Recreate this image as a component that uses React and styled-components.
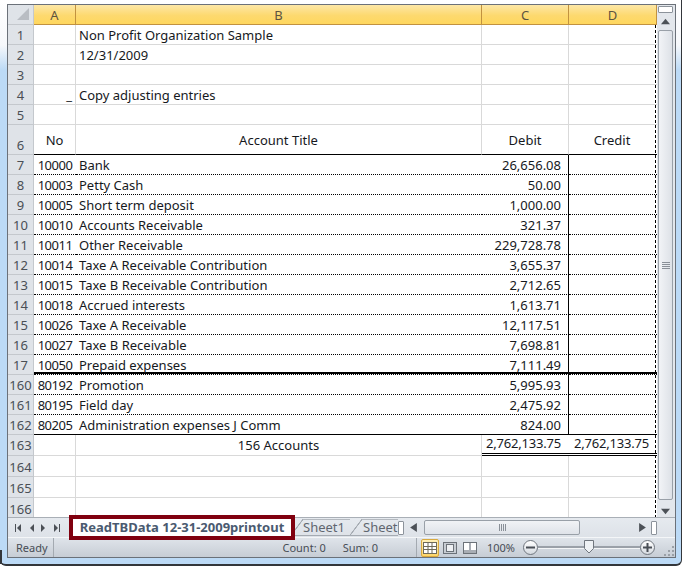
import React from "react";
import styled, { createGlobalStyle } from "styled-components";

const GlobalStyle = createGlobalStyle`
  html, body { margin: 0; padding: 0; background: #fff; }
  body { font-family: "Noto Sans", "Open Sans", sans-serif; overflow: hidden; }
`;

const COLUMNS = "26px 42px 406px 87px 88px";

const Frame = styled.div`
  position: relative;
  width: 682px;
  height: 566px;
  box-sizing: border-box;
  padding: 4px 5px 5px 7px;
  background: linear-gradient(180deg, #ffffff 0, #f6f8fb 45px, #bcdaf6 70px, #bcdaf6 100%);
  border-bottom: 2px solid #33363b;
  border-right: 1px solid #33363b;
  border-bottom-right-radius: 6px;
  border-bottom-left-radius: 6px;
  &::before {
    content: "";
    position: absolute;
    left: 0;
    bottom: 0;
    width: 2px;
    height: 14px;
    background: #33363b;
  }
`;

const Content = styled.div`
  display: flex;
  flex-direction: column;
  border: 1px solid #6b7179;
  border-bottom: none;
`;

const Workspace = styled.div`
  display: flex;
  height: 512px;
`;

const Sheet = styled.div`
  width: 649px;
  background: #fff;
  display: flex;
  flex-direction: column;
  overflow: hidden;
`;

const HeaderRow = styled.div`
  display: grid;
  grid-template-columns: ${COLUMNS};
  height: 20px;
  flex: none;
`;

const Corner = styled.div`
  position: relative;
  background: #dfe3e8;
  border-right: 1px solid #c4c8cd;
  border-bottom: 1px solid #c4c8cd;
  &::after {
    content: "";
    position: absolute;
    right: 4px;
    bottom: 4px;
    border-style: solid;
    border-width: 0 0 12px 12px;
    border-color: transparent transparent #b9bdc3 transparent;
  }
`;

const ColumnHead = styled.div`
  box-sizing: border-box;
  padding-top: 1px;
  background: linear-gradient(180deg, #fde7a6 0%, #fdd96f 55%, #ffd75e 100%);
  border-right: 1px solid #c2923f;
  border-bottom: 1px solid #c2923f;
  color: #5d5340;
  font-size: 13px;
  line-height: 18px;
  text-align: center;
`;

const Body = styled.div`
  position: relative;
  flex: 1;
  &::after {
    content: "";
    position: absolute;
    top: 0;
    bottom: 0;
    right: 1px;
    width: 1px;
    background: repeating-linear-gradient(180deg, #000 0 3px, transparent 3px 5px);
  }
`;

const Row = styled.div`
  display: grid;
  grid-template-columns: ${COLUMNS};
  height: ${p => p.$height || 20}px;
`;

const RowHead = styled.div`
  box-sizing: border-box;
  background: #dfe3e8;
  border-right: 1px solid #c4c8cd;
  border-bottom: 1px solid #c4c8cd;
  color: #4a4f55;
  font-size: 13px;
  line-height: ${p => (p.$lift ? 19 : 17)}px;
  display: flex;
  align-items: flex-end;
  justify-content: center;
`;

const lines = {
  grid: "1px solid #d9d9d9",
  dotted: "1px dotted #000",
  solid: "1px solid #000",
  double: "3px double #000"
};

const Cell = styled.div`
  box-sizing: border-box;
  min-width: 0;
  padding: ${p => (p.$middle ? "2px" : "0")} ${p => p.$inset || 3}px 0 3px;
  white-space: nowrap;
  overflow: hidden;
  color: #16191d;
  font-size: 13px;
  letter-spacing: ${p => p.$track || 0}px;
  line-height: ${p => (p.$lift ? 19 : 17)}px;
  display: flex;
  align-items: ${p => (p.$middle ? "center" : "flex-end")};
  justify-content: ${p =>
    p.$align === "right" ? "flex-end" : p.$align === "center" ? "center" : "flex-start"};
  border-right: ${p => lines[p.$right] || "none"};
  border-bottom: ${p => lines[p.$bottom] || lines.grid};
  box-shadow: ${p => (p.$heavy ? "inset 0 -2px 0 #000" : "none")};
`;

const TabBar = styled.div`
  height: 20px;
  flex: none;
  background: linear-gradient(180deg, #e6eaef 0%, #dde2e8 100%);
  border-top: 1px solid #a9afb6;
  box-sizing: border-box;
  display: flex;
  align-items: center;
`;

const TabNav = styled.div`
  width: 61px;
  flex: none;
  display: flex;
  align-items: center;
  justify-content: space-around;
  padding: 0 6px 0 4px;
  box-sizing: border-box;
`;

const ActiveTab = styled.div`
  width: 218px;
  height: 17px;
  flex: none;
  margin-left: 4px;
  background: #fff;
  color: #4a5a70;
  font-size: 13px;
  font-weight: 700;
  line-height: 16px;
  text-align: center;
  white-space: nowrap;
  outline: 4px solid #80000f;
  position: relative;
  z-index: 2;
`;

const Tab = styled.div`
  position: relative;
  width: ${p => p.$width}px;
  height: 17px;
  flex: none;
  box-sizing: border-box;
  overflow: hidden;
  color: #5f6670;
  font-size: 13px;
  line-height: 16px;
  padding-left: ${p => p.$pad}px;
  white-space: nowrap;
  border-bottom: 1px solid #a5abb2;
  &::before {
    content: "";
    position: absolute;
    left: 0;
    top: 0;
    bottom: 0;
    width: 12px;
    background: linear-gradient(to bottom right, transparent 47%, #a5abb2 49%, #a5abb2 53%, transparent 55%);
  }
  &::after {
    content: "";
    position: absolute;
    left: 12px;
    right: 0;
    top: 0;
    height: 1px;
    background: #b4b9bf;
  }
`;

const Splitter = styled.div`
  width: 6px;
  height: 14px;
  flex: none;
  margin-right: ${p => p.$after || 0}px;
  box-sizing: border-box;
  background: #fff;
  border: 1px solid #8c939b;
  border-radius: 1px;
`;

const HScroll = styled.div`
  flex: 1;
  display: flex;
  align-items: center;
  padding-left: 5px;
`;

const HThumb = styled.div`
  width: 156px;
  height: 15px;
  box-sizing: border-box;
  margin: 0 58px 0 6px;
  background: linear-gradient(180deg, #f1f3f6 0%, #dfe3e9 100%);
  border: 1px solid #99a0a8;
  border-radius: 2px;
  display: flex;
  align-items: center;
  justify-content: center;
  gap: 1px;
`;

const GripLine = styled.span`
  width: 1px;
  height: 7px;
  background: #8a9098;
`;

const VScroll = styled.div`
  width: 18px;
  flex: none;
  background: #e3e7ec;
  display: flex;
  flex-direction: column;
  align-items: center;
  padding-right: 1px;
  box-sizing: border-box;
`;

const VSplit = styled.div`
  width: 15px;
  height: 7px;
  margin-top: 1px;
  box-sizing: border-box;
  background: #fff;
  border: 1px solid #8c939b;
  border-radius: 1px;
`;

const VThumb = styled.div`
  width: 15px;
  height: 470px;
  flex: none;
  box-sizing: border-box;
  background: linear-gradient(90deg, #f2f4f7 0%, #dde1e7 100%);
  border: 1px solid #99a0a8;
  border-radius: 2px;
  display: flex;
  flex-direction: column;
  align-items: center;
  justify-content: center;
  gap: 1px;
`;

const HGrip = styled.span`
  width: 8px;
  height: 1px;
  background: #8a9098;
`;

const ArrowSlot = styled.div`
  height: 17px;
  flex: none;
  box-sizing: border-box;
  padding-top: ${p => p.$down || 0}px;
  display: flex;
  align-items: center;
  justify-content: center;
`;

const StatusBar = styled.div`
  height: 21px;
  flex: none;
  box-sizing: border-box;
  background: linear-gradient(180deg, #dfe4ea 0%, #c7cdd5 100%);
  border-top: 1px solid #f4f6f8;
  border-bottom: 1px solid #6b7179;
  color: #474d55;
  font-size: 11px;
  display: flex;
  align-items: center;
`;

const Ready = styled.div`
  width: 50px;
  padding-left: 8px;
  box-sizing: border-box;
  height: 100%;
  line-height: 19px;
  border-right: 1px solid #a4aab1;
`;

const StatusText = styled.span`
  margin-left: ${p => p.$left}px;
  white-space: nowrap;
`;

const ViewGroup = styled.div`
  margin-left: ${p => p.$left}px;
  padding-left: 4px;
  border-left: 1px solid #a4aab1;
  height: 100%;
  display: flex;
  align-items: center;
  gap: 2px;
`;

const ViewButton = styled.div`
  width: 18px;
  height: 18px;
  box-sizing: border-box;
  display: flex;
  align-items: center;
  justify-content: center;
  border-radius: 2px;
  ${p =>
    p.$active &&
    "background: linear-gradient(180deg, #fff0b8 0%, #fdd568 100%); border: 1px solid #d8a93f;"}
`;

const ZoomRound = styled.div`
  width: 15px;
  height: 15px;
  flex: none;
  margin-left: ${p => p.$left || 0}px;
  box-sizing: border-box;
  border: 1px solid #70767e;
  border-radius: 50%;
  background: linear-gradient(180deg, #ffffff 0%, #d5dae0 100%);
  display: flex;
  align-items: center;
  justify-content: center;
  color: #4a4f56;
`;

const ZoomTrack = styled.div`
  width: 102px;
  height: 2px;
  flex: none;
  background: #9aa0a8;
  border-bottom: 1px solid #f3f5f7;
  position: relative;
`;

const ZoomKnob = styled.div`
  position: absolute;
  left: 46px;
  top: -6px;
  line-height: 0;
`;

const GripDots = styled.div`
  margin-left: 8px;
  align-self: flex-end;
  line-height: 0;
`;

const Triangle = ({ dir, color = "#4c5157", size = 9 }) => {
  const pts = {
    left: "7,0 7,8 1,4",
    right: "1,0 1,8 7,4",
    up: "0,6.5 8,6.5 4,1.5",
    down: "0,1.5 8,1.5 4,6.5"
  };
  return (
    <svg width={size} height={size} viewBox="0 0 8 8">
      <polygon points={pts[dir]} fill={color} />
    </svg>
  );
};

const NavIcon = ({ dir, bar }) => (
  <svg width="7" height="8" viewBox="0 0 7 8">
    {dir === "left" ? <polygon points="6,0 6,8 2,4" fill="#4c5157" /> : <polygon points="1,0 1,8 5,4" fill="#4c5157" />}
    {bar && <rect x={dir === "left" ? 0 : 6} y="0" width="1" height="8" fill="#4c5157" />}
  </svg>
);

const NormalIcon = () => (
  <svg width="14" height="12" viewBox="0 0 14 12">
    <rect x="0.5" y="0.5" width="13" height="11" fill="#fff" stroke="#6f6a58" />
    <path d="M0 4.5h14M0 7.5h14M5 0v12M9 0v12" stroke="#6f6a58" strokeWidth="1" />
  </svg>
);

const PageIcon = () => (
  <svg width="14" height="12" viewBox="0 0 14 12">
    <rect x="0.5" y="0.5" width="13" height="11" fill="#c8cdd3" stroke="#6c7279" />
    <rect x="3.5" y="2.5" width="7" height="7" fill="#eef0f3" stroke="#6c7279" />
  </svg>
);

const BreakIcon = () => (
  <svg width="14" height="12" viewBox="0 0 14 12">
    <rect x="0.5" y="0.5" width="13" height="11" fill="#a8adb4" stroke="#6c7279" />
    <rect x="1" y="1" width="5" height="7" fill="#fff" />
    <rect x="8" y="1" width="5" height="7" fill="#fff" />
  </svg>
);

const Minus = () => (
  <svg width="9" height="9" viewBox="0 0 9 9"><rect x="0" y="3.5" width="9" height="2" fill="currentColor" /></svg>
);

const Plus = () => (
  <svg width="9" height="9" viewBox="0 0 9 9"><path d="M0 3.5h9v2H0zM3.5 0h2v9h-2z" fill="currentColor" /></svg>
);

const Knob = () => (
  <svg width="10" height="14" viewBox="0 0 10 14">
    <path d="M.5.5h9v8L5 13 .5 8.5z" fill="#eef1f4" stroke="#70767e" />
  </svg>
);

const Grip = () => (
  <svg width="12" height="12" viewBox="0 0 12 12" fill="#9aa0a7">
    <rect x="9" y="1" width="2" height="2" />
    <rect x="5" y="5" width="2" height="2" />
    <rect x="9" y="5" width="2" height="2" />
    <rect x="1" y="9" width="2" height="2" />
    <rect x="5" y="9" width="2" height="2" />
    <rect x="9" y="9" width="2" height="2" />
  </svg>
);

const accounts = [
  [7, "10000", "Bank", "26,656.08"],
  [8, "10003", "Petty Cash", "50.00"],
  [9, "10005", "Short term deposit", "1,000.00"],
  [10, "10010", "Accounts Receivable", "321.37"],
  [11, "10011", "Other Receivable", "229,728.78"],
  [12, "10014", "Taxe A Receivable Contribution", "3,655.37"],
  [13, "10015", "Taxe B Receivable Contribution", "2,712.65"],
  [14, "10018", "Accrued interests", "1,613.71"],
  [15, "10026", "Taxe A Receivable", "12,117.51"],
  [16, "10027", "Taxe B Receivable", "7,698.81"],
  [17, "10050", "Prepaid expenses", "7,111.49"],
  [160, "80192", "Promotion", "5,995.93"],
  [161, "80195", "Field day", "2,475.92"],
  [162, "80205", "Administration expenses J Comm", "824.00"]
];

const PlainRow = ({ n, a, b, height, aAlign }) => (
  <Row $height={height}>
    <RowHead>{n}</RowHead>
    <Cell $right="grid" $align={aAlign}>{a}</Cell>
    <Cell $right="grid">{b}</Cell>
    <Cell $right="grid" />
    <Cell />
  </Row>
);

const AccountRow = ({ n, no, title, debit }) => {
  const line = n === 162 ? "solid" : "dotted";
  const heavy = n === 17;
  return (
    <Row>
      <RowHead>{n}</RowHead>
      <Cell $track={-0.5} $align="center" $bottom={line} $heavy={heavy}>{no}</Cell>
      <Cell $bottom={line} $heavy={heavy}>{title}</Cell>
      <Cell $align="right" $inset={7} $right="solid" $bottom={line} $heavy={heavy}>{debit}</Cell>
      <Cell $bottom={line} $heavy={heavy} />
    </Row>
  );
};

const App = () => (
  <Frame>
    <GlobalStyle />
    <Content>
      <Workspace>
        <Sheet>
          <HeaderRow>
            <Corner />
            {["A", "B", "C", "D"].map(c => (
              <ColumnHead key={c}>{c}</ColumnHead>
            ))}
          </HeaderRow>
          <Body>
            <PlainRow n={1} b="Non Profit Organization Sample" />
            <PlainRow n={2} b="12/31/2009" />
            <PlainRow n={3} />
            <PlainRow n={4} a="_" aAlign="right" b="Copy adjusting entries" />
            <PlainRow n={5} />
            <Row $height={30}>
              <RowHead>6</RowHead>
              <Cell $middle $align="center" $right="grid" $bottom="solid">No</Cell>
              <Cell $middle $align="center" $right="grid" $bottom="solid">Account Title</Cell>
              <Cell $middle $align="center" $right="grid" $bottom="solid">Debit</Cell>
              <Cell $middle $align="center" $inset={5} $bottom="solid">Credit</Cell>
            </Row>
            {accounts.map(([n, no, title, debit]) => (
              <AccountRow key={n} n={n} no={no} title={title} debit={debit} />
            ))}
            <Row $height={21}>
              <RowHead $lift>163</RowHead>
              <Cell $lift $right="grid" />
              <Cell $lift $right="grid" $align="center">156 Accounts</Cell>
              <Cell $lift $track={-0.2} $align="right" $inset={8} $bottom="double">2,762,133.75</Cell>
              <Cell $lift $track={-0.2} $align="right" $inset={8} $bottom="double">2,762,133.75</Cell>
            </Row>
            <PlainRow n={164} height={21} />
            <PlainRow n={165} height={21} />
            <PlainRow n={166} height={21} />
          </Body>
        </Sheet>
        <VScroll>
          <VSplit />
          <ArrowSlot><Triangle dir="up" /></ArrowSlot>
          <VThumb>
            <HGrip /><HGrip /><HGrip /><HGrip />
          </VThumb>
          <ArrowSlot $down={5}><Triangle dir="down" /></ArrowSlot>
        </VScroll>
      </Workspace>
      <TabBar>
        <TabNav>
          <NavIcon dir="left" bar />
          <NavIcon dir="left" />
          <NavIcon dir="right" />
          <NavIcon dir="right" bar />
        </TabNav>
        <ActiveTab>ReadTBData 12-31-2009printout</ActiveTab>
        <Tab $width={59} $pad={12}>Sheet1</Tab>
        <Tab $width={48} $pad={13}>Sheet1</Tab>
        <Splitter />
        <HScroll>
          <Triangle dir="left" />
          <HThumb>
            <GripLine /><GripLine /><GripLine /><GripLine />
          </HThumb>
          <Triangle dir="right" />
        </HScroll>
        <Splitter $after={18} />
      </TabBar>
      <StatusBar>
        <Ready>Ready</Ready>
        <StatusText $left={228}>Count: 0</StatusText>
        <StatusText $left={17}>Sum: 0</StatusText>
        <ViewGroup $left={38}>
          <ViewButton $active><NormalIcon /></ViewButton>
          <ViewButton><PageIcon /></ViewButton>
          <ViewButton><BreakIcon /></ViewButton>
        </ViewGroup>
        <StatusText $left={8}>100%</StatusText>
        <ZoomRound $left={8}><Minus /></ZoomRound>
        <ZoomTrack><ZoomKnob><Knob /></ZoomKnob></ZoomTrack>
        <ZoomRound><Plus /></ZoomRound>
        <GripDots><Grip /></GripDots>
      </StatusBar>
    </Content>
  </Frame>
);

export default App;
